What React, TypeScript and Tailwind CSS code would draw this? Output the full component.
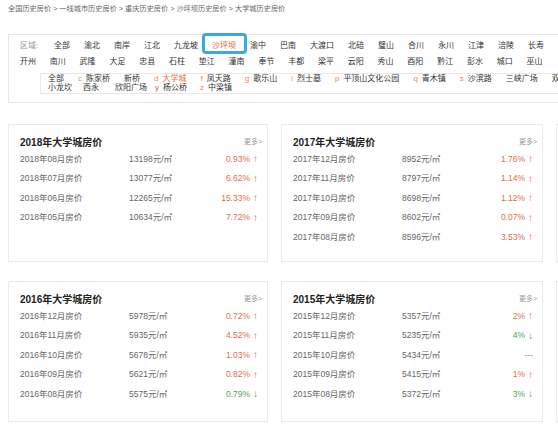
import React from "react";

// 大学城历史房价 page: breadcrumb, district filter, yearly price cards.

const FONT = { fontFamily: '"Liberation Sans", "Noto Sans CJK SC", sans-serif' };

const CRUMBS = ["全国历史房价", "一线城市历史房价", "重庆历史房价", "沙坪坝历史房价", "大学城历史房价"];

const DISTRICTS_1 = ["全部", "渝北", "南岸", "江北", "九龙坡", "沙坪坝", "渝中", "巴南", "大渡口", "北碚", "璧山", "合川", "永川", "江津", "涪陵", "长寿"];
const DISTRICTS_2 = ["开州", "南川", "武隆", "大足", "忠县", "石柱", "垫江", "潼南", "奉节", "丰都", "梁平", "云阳", "秀山", "酉阳", "黔江", "彭水", "城口", "巫山"];

type Area = { l?: string; t: string; on?: boolean };
const AREAS_1: Area[] = [
  { t: "全部" },
  { l: "c", t: "陈家桥" },
  { t: "新桥" },
  { l: "d", t: "大学城", on: true },
  { l: "f", t: "凤天路" },
  { l: "g", t: "歌乐山" },
  { l: "l", t: "烈士墓" },
  { l: "p", t: "平顶山文化公园" },
  { l: "q", t: "青木镇" },
  { l: "s", t: "沙滨路" },
  { t: "三峡广场" },
  { t: "双碑" },
];

type Row = { m: string; p: string; c: string; up: boolean | null };
type Card = { title: string; rows: Row[] };

const CARDS: Card[] = [
  {
    title: "2018年大学城房价",
    rows: [
      { m: "2018年08月房价", p: "13198", c: "0.93%", up: true },
      { m: "2018年07月房价", p: "13077", c: "6.62%", up: true },
      { m: "2018年06月房价", p: "12265", c: "15.33%", up: true },
      { m: "2018年05月房价", p: "10634", c: "7.72%", up: true },
    ],
  },
  {
    title: "2017年大学城房价",
    rows: [
      { m: "2017年12月房价", p: "8952", c: "1.76%", up: true },
      { m: "2017年11月房价", p: "8797", c: "1.14%", up: true },
      { m: "2017年10月房价", p: "8698", c: "1.12%", up: true },
      { m: "2017年09月房价", p: "8602", c: "0.07%", up: true },
      { m: "2017年08月房价", p: "8596", c: "3.53%", up: true },
    ],
  },
  {
    title: "2016年大学城房价",
    rows: [
      { m: "2016年12月房价", p: "5978", c: "0.72%", up: true },
      { m: "2016年11月房价", p: "5935", c: "4.52%", up: true },
      { m: "2016年10月房价", p: "5678", c: "1.03%", up: true },
      { m: "2016年09月房价", p: "5621", c: "0.82%", up: true },
      { m: "2016年08月房价", p: "5575", c: "0.79%", up: false },
    ],
  },
  {
    title: "2015年大学城房价",
    rows: [
      { m: "2015年12月房价", p: "5357", c: "2%", up: true },
      { m: "2015年11月房价", p: "5235", c: "4%", up: false },
      { m: "2015年10月房价", p: "5434", c: "---", up: null },
      { m: "2015年09月房价", p: "5415", c: "1%", up: true },
      { m: "2015年08月房价", p: "5372", c: "3%", up: false },
    ],
  },
];

function PriceCard({ card, tall }: { card: Card; tall?: boolean }) {
  return (
    <div className={`${tall ? "h-[141px]" : "h-[138px]"} border border-[#ebebeb] bg-white pl-[11px] pr-[5px] pt-[11px]`}>
      <div className="flex h-[14px] items-center justify-between">
        <span className="text-[10px] font-bold text-[#222]">{card.title}</span>
        <span className="text-[7px] text-[#999]">更多&gt;</span>
      </div>
      {card.rows.map((r) => (
        <div key={r.m} className="flex h-[19.5px] items-center pr-[4px] text-[8.5px] text-[#666]">
          <span className="w-[109px]">{r.m}</span>
          <span className="flex-1">{r.p}元/㎡</span>
          {r.up === null ? (
            <span className="text-[#999]">{r.c}</span>
          ) : (
            <span className={`flex items-center ${r.up ? "text-[#e06d4c]" : "text-[#52a552]"}`}>
              {r.c}
              <span className="ml-[3px] text-[10px] leading-[10px]">{r.up ? "↑" : "↓"}</span>
            </span>
          )}
        </div>
      ))}
    </div>
  );
}

export default function App() {
  return (
    <div className="h-[432px] w-[558px] overflow-hidden bg-white" style={FONT}>
      <div className="w-[800px] px-[8px] pt-[4px]">
        {/* breadcrumb */}
        <div className="flex h-[10px] items-center text-[7.2px] leading-[10px] text-[#666]">
          {CRUMBS.map((c, i) => (
            <span key={c}>
              {i > 0 && <span className="mx-[2px]">&gt;</span>}
              {c}
            </span>
          ))}
        </div>

        {/* filter */}
        <div className="mt-[20px] border border-[#e6e6e6] pb-[8px] pl-[11px] pt-[3px]">
          <div className="flex h-[16px] items-center gap-[14px] text-[8px] text-[#333]">
            <span className="-mr-[14px] w-[34px] text-[#999]">区域:</span>
            {DISTRICTS_1.map((d) =>
              d === "沙坪坝" ? (
                <span key={d} className="relative text-[#e8603a]">
                  {d}
                  <span className="absolute -bottom-[2px] -left-[10px] -right-[11px] -top-[7px] rounded-[4px] border-[3px] border-[#3aaadc]" />
                </span>
              ) : (
                <span key={d}>{d}</span>
              ),
            )}
          </div>
          <div className="flex h-[16px] items-center gap-[13.8px] text-[8px] text-[#333]">
            {DISTRICTS_2.map((d) => (
              <span key={d}>{d}</span>
            ))}
          </div>

          <div className="ml-[20px] mt-[3px] border border-[#e8e8e8] pb-[0.5px] pl-[7px] pt-[1px] text-[8px] leading-[8.5px] text-[#333]">
            <div className="flex gap-[14px]">
              {AREAS_1.map((a) => (
                <span key={a.t} className={a.on ? "text-[#e8703a]" : ""}>
                  {a.l && <span className="mr-[4px] text-[#f08c50]">{a.l}</span>}
                  {a.t}
                </span>
              ))}
            </div>
            <div className="flex">
              <span>小龙坎</span>
              <span className="ml-[11px]">西永</span>
              <span className="ml-[16px]">欣阳广场</span>
              <span className="ml-[8px]">
                <span className="mr-[4px] text-[#e0604a]">y</span>杨公桥
              </span>
              <span className="ml-[13px]">
                <span className="mr-[4px] text-[#f08c50]">z</span>中梁镇
              </span>
            </div>
          </div>
        </div>

        {/* yearly cards */}
        <div className="mt-[21px] grid grid-cols-[260px_262px_260px] gap-x-[13px] gap-y-[19px]">
          <PriceCard card={CARDS[0]} />
          <PriceCard card={CARDS[1]} />
          <div className="h-[138px] border border-[#ebebeb]" />
          <PriceCard card={CARDS[2]} tall />
          <PriceCard card={CARDS[3]} tall />
          <div className="h-[141px] border border-[#ebebeb]" />
        </div>
      </div>
    </div>
  );
}
